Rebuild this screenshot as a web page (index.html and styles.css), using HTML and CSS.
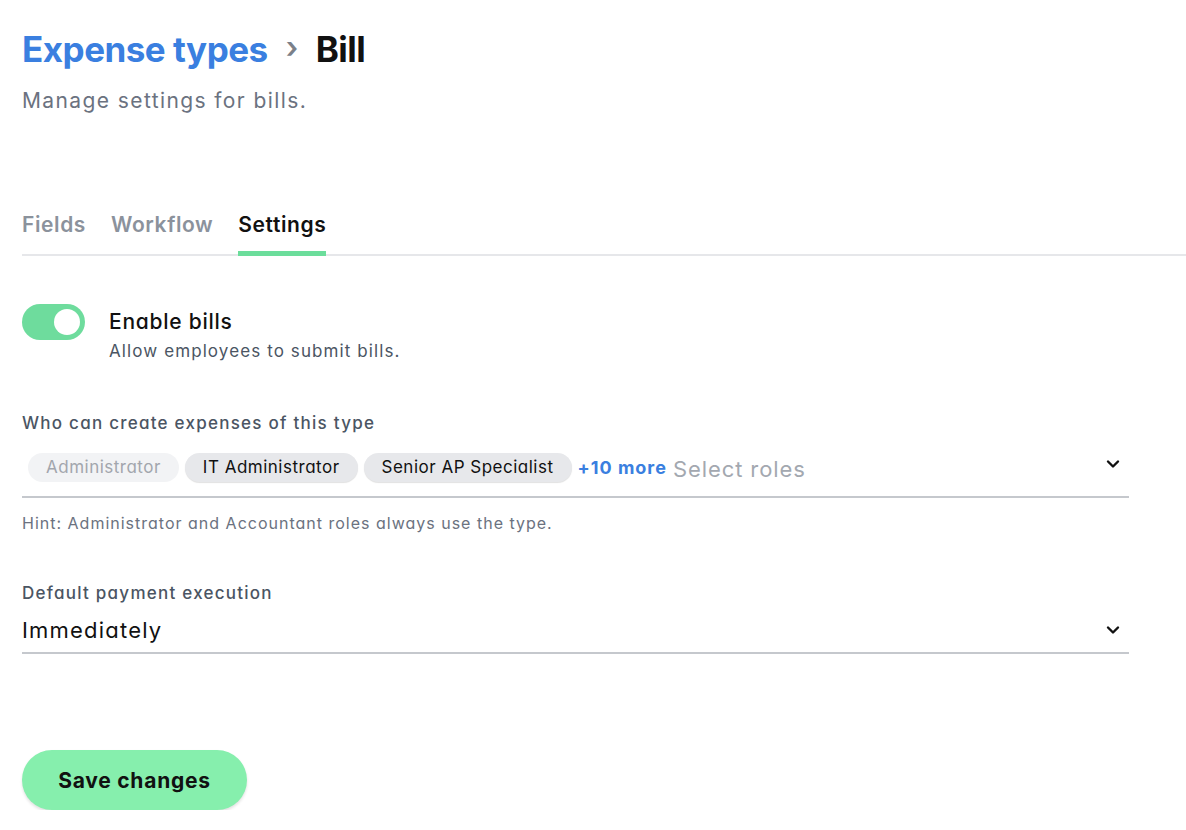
FILE: index.html
```html
<!DOCTYPE html>
<html lang="en">

<head>
  <meta charset="UTF-8">
  <meta name="viewport" content="width=device-width">
  <title>Bill settings</title>
  <link rel="stylesheet" href="styles.css">
</head>

<body>

  <header class="page-head">
    <h1 class="crumbs">
      <a href="#">Expense types</a>
      <span class="crumb-sep">&rsaquo;</span>
      <span>Bill</span>
    </h1>
    <p class="subtitle">Manage settings for bills.</p>
  </header>

  <nav class="tabs">
    <a href="#" class="tab">Fields</a>
    <a href="#" class="tab">Workflow</a>
    <a href="#" class="tab active">Settings</a>
  </nav>

  <form class="settings">

    <div class="switch-row">
      <span class="switch on"><span class="knob"></span></span>
      <div>
        <div class="switch-title">Enable bills</div>
        <div class="switch-note">Allow employees to submit bills.</div>
      </div>
    </div>

    <div class="field">
      <label>Who can create expenses of this type</label>
      <div class="select multi">
        <span class="chip disabled">Administrator</span>
        <span class="chip">IT Administrator</span>
        <span class="chip">Senior AP Specialist</span>
        <span class="more">+10 more</span>
        <span class="placeholder">Select roles</span>
        <svg class="chevron" width="16" height="16" viewBox="0 0 16 16">
          <path d="M3 5.5 L8 10.5 L13 5.5" fill="none" stroke="#111" stroke-width="2.4" stroke-linecap="round" stroke-linejoin="round"/>
        </svg>
      </div>
      <p class="hint">Hint: Administrator and Accountant roles always use the type.</p>
    </div>

    <div class="field">
      <label>Default payment execution</label>
      <div class="select">
        <span class="value">Immediately</span>
        <svg class="chevron" width="16" height="16" viewBox="0 0 16 16">
          <path d="M3 5.5 L8 10.5 L13 5.5" fill="none" stroke="#111" stroke-width="2.4" stroke-linecap="round" stroke-linejoin="round"/>
        </svg>
      </div>
    </div>

    <button type="button" class="save">Save changes</button>

  </form>

</body>

</html>
```

FILE: styles.css
```css
* {
  box-sizing: border-box;
  margin: 0;
  padding: 0;
}

body {
  font-family: Inter, "Noto Sans", sans-serif;
  font-feature-settings: "cv11";
  color: #111;
  background-color: #ffffff;
  padding: 0 0 0 22px;
}

.page-head {
  padding-top: 27px;
}

.crumbs {
  display: flex;
  align-items: center;
  gap: 18px;
  font-size: 35px;
  font-weight: 700;
  letter-spacing: -0.5px;
  line-height: 44px;
}

.crumbs a {
  color: #3a7fe0;
  text-decoration: none;
}

.crumb-sep {
  color: #7b8089;
  font-size: 30px;
  font-weight: 600;
  margin-top: -4px;
}

.subtitle {
  margin-top: 17px;
  font-size: 21px;
  letter-spacing: 1.4px;
  color: #6b7280;
  font-feature-settings: normal;
}

.tabs {
  display: flex;
  gap: 25px;
  margin-top: 98px;
  border-bottom: 2px solid #e6e7ea;
}

.tab {
  font-size: 21px;
  font-weight: 600;
  letter-spacing: 0.6px;
  color: #8b929c;
  text-decoration: none;
  padding-bottom: 12px;
  border-bottom: 5px solid transparent;
  margin-bottom: -2px;
  line-height: 28px;
}

.tab.active {
  color: #111;
  border-bottom-color: #6bdd9b;
  border-radius: 3px 3px 0 0;
}

.settings {
  width: 1107px;
}

.switch-row {
  display: flex;
  gap: 24px;
  margin-top: 48px;
}

.switch {
  display: flex;
  align-items: center;
  justify-content: flex-end;
  width: 63px;
  height: 36px;
  padding: 5px;
  border-radius: 18px;
  background-color: #6edc9d;
}

.knob {
  width: 26px;
  height: 26px;
  border-radius: 50%;
  background-color: #ffffff;
}

.switch-title {
  font-size: 21px;
  font-weight: 500;
  letter-spacing: 0.75px;
  line-height: 28px;
  margin-top: 4px;
}

.switch-note {
  font-size: 17px;
  letter-spacing: 1.1px;
  color: #4b5563;
  margin-top: 5px;
}

.field {
  margin-top: 50px;
}

.field label {
  display: block;
  font-size: 17px;
  font-weight: 500;
  letter-spacing: 1.25px;
  color: #4b5563;
  line-height: 24px;
}

.select {
  display: flex;
  align-items: center;
  gap: 6px;
  border-bottom: 2px solid #c5c8cd;
  height: 44px;
  padding-right: 8px;
}

.select.multi {
  margin-top: 10px;
  padding-left: 6px;
  height: 53px;
  padding-bottom: 6px;
}

.chip {
  font-size: 17px;
  letter-spacing: 0.5px;
  line-height: 29px;
  padding: 0 18px;
  border-radius: 15px;
  background-color: #e7e8eb;
  box-shadow: 0 1px 1px rgba(0, 0, 0, 0.12);
  color: #111;
}

.chip.disabled {
  background-color: #f2f3f5;
  color: #a2a6ad;
  box-shadow: none;
}

.more {
  font-size: 18px;
  font-weight: 700;
  letter-spacing: 1px;
  color: #3a7fe0;
  font-feature-settings: normal;
}

.placeholder {
  font-size: 22px;
  letter-spacing: 0.9px;
  color: #a3a8b0;
  margin-top: 2px;
}

.value {
  font-size: 22px;
  letter-spacing: 1.2px;
  color: #111;
}

.chevron {
  margin-left: auto;
}

.multi .chevron {
  margin-top: -8px;
}

.hint {
  margin-top: 15px;
  font-size: 16px;
  letter-spacing: 1px;
  color: #6b7280;
}

.field + .field {
  margin-top: 48px;
}

.field + .field .select {
  margin-top: 4px;
  height: 45px;
  padding-bottom: 2px;
}

.save {
  margin-top: 96px;
  width: 225px;
  height: 60px;
  border: none;
  border-radius: 30px;
  background-color: #86efad;
  box-shadow: 0 2px 3px rgba(0, 0, 0, 0.12);
  font-family: Inter, sans-serif;
  font-size: 21px;
  font-weight: 700;
  letter-spacing: 0.75px;
  color: #111;
  cursor: pointer;
}
```
